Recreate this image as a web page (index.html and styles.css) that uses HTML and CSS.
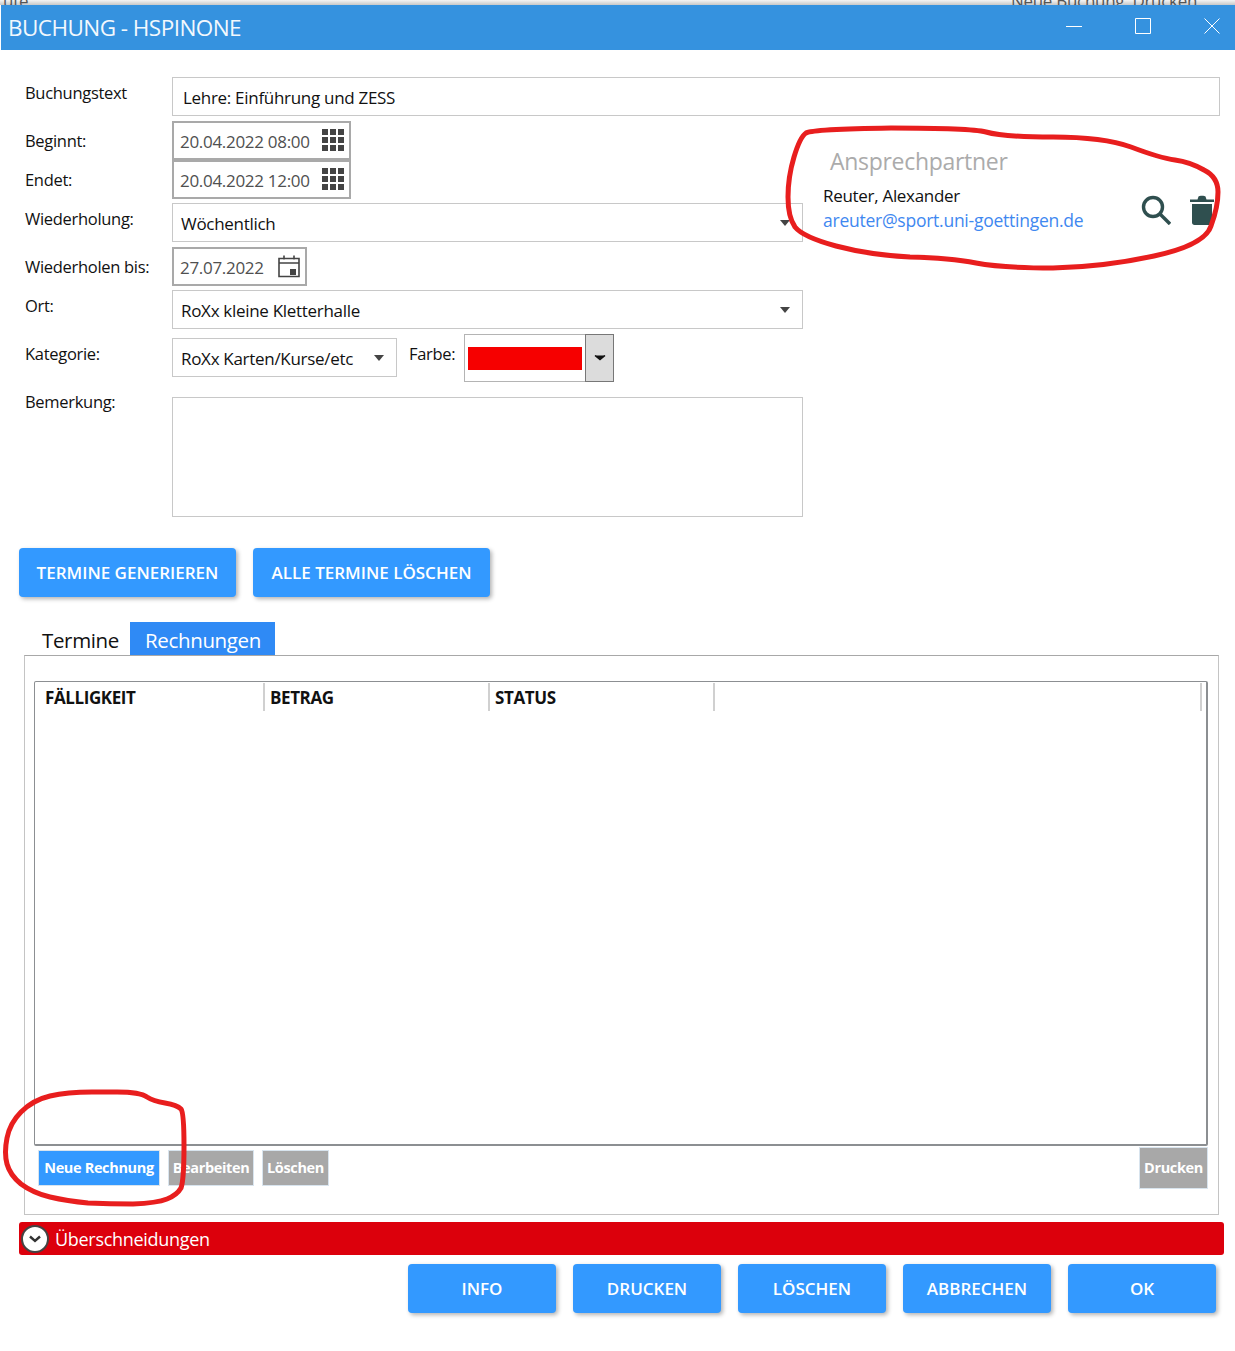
FILE: index.html
```html
<!DOCTYPE html>
<html lang="de">
<head>
<meta charset="utf-8">
<title>Buchung - HSPinOne</title>
<link rel="stylesheet" href="styles.css">
</head>
<body>
<div class="page">
  <div class="behind">
    <span class="behind-left">ute</span>
    <span class="behind-right">Neue Buchung &nbsp;Drucken</span>
  </div>
  <header class="titlebar">
    <h1 class="title">BUCHUNG - HSPINONE</h1>
    <div class="winctl">
      <svg class="winicon" viewBox="0 0 16 16"><path d="M0 8.5h16"/></svg>
      <svg class="winicon" viewBox="0 0 16 16"><path d="M.5.5h15v15H.5z"/></svg>
      <svg class="winicon" viewBox="0 0 16 16"><path d="M.5.5l15 15M15.500.5l-15 15"/></svg>
    </div>
  </header>

  <div class="row row-text">
    <label class="label label-top">Buchungstext</label>
    <div class="field field-text">Lehre: Einführung und ZESS</div>
  </div>

  <div class="upper">
    <div class="left">
      <div class="row row-begin">
        <label class="label">Beginnt:</label>
        <div class="field date date-wide">20.04.2022 08:00
          <svg class="grid-icon" viewBox="0 0 22 22"><path d="M0 0h6v6H0zM8 0h6v6H8zM16 0h6v6h-6zM0 8h6v6H0zM8 8h6v6H8zM16 8h6v6h-6zM0 16h6v6H0zM8 16h6v6H8zM16 16h6v6h-6z"/></svg>
        </div>
      </div>
      <div class="row">
        <label class="label">Endet:</label>
        <div class="field date date-wide">20.04.2022 12:00
          <svg class="grid-icon" viewBox="0 0 22 22"><path d="M0 0h6v6H0zM8 0h6v6H8zM16 0h6v6h-6zM0 8h6v6H0zM8 8h6v6H8zM16 8h6v6h-6zM0 16h6v6H0zM8 16h6v6H8zM16 16h6v6h-6z"/></svg>
        </div>
      </div>
      <div class="row row-repeat">
        <label class="label label-top">Wiederholung:</label>
        <div class="field select select-full">Wöchentlich<span class="caret"></span></div>
      </div>
      <div class="row row-until">
        <label class="label">Wiederholen bis:</label>
        <div class="field date date-small">27.07.2022
          <svg class="cal-icon" viewBox="0 0 22 24"><path class="cal-line" d="M1 4.500h20v18H1zM1 9h20M6 1.500v4M16 1.500v4"/><path class="cal-fill" d="M12 15h6v6h-6z"/></svg>
        </div>
      </div>
      <div class="row row-place">
        <label class="label label-top">Ort:</label>
        <div class="field select select-full">RoXx kleine Kletterhalle<span class="caret"></span></div>
      </div>
      <div class="row row-cat">
        <label class="label label-cat">Kategorie:</label>
        <div class="field select select-cat"><span class="clip">RoXx Karten/Kurse/etc</span><span class="caret"></span></div>
        <label class="label-color">Farbe:</label>
        <div class="picker">
          <div class="swatch-wrap"><div class="swatch"></div></div>
          <div class="picker-btn"><svg class="picker-chev" viewBox="0 0 12 8"><path d="M1 1.500l5 4 5-4"/></svg></div>
        </div>
      </div>
      <div class="row">
        <label class="label label-note">Bemerkung:</label>
        <div class="field note"></div>
      </div>
    </div>

    <section class="contact">
      <h2 class="contact-title">Ansprechpartner</h2>
      <div class="contact-row">
        <div class="person">
          <div class="person-name">Reuter, Alexander</div>
          <a class="person-mail" href="#">areuter@sport.uni-goettingen.de</a>
        </div>
        <svg class="icon-search" viewBox="0 0 30 30"><circle cx="12" cy="12" r="9.500"/><path d="M19 19l10 10"/></svg>
        <svg class="icon-trash" viewBox="0 0 24 30"><path d="M0 4.500h24V7H0zM8.500 1.500C9 .5 15 .5 15.500 1.500l1 3h-9zM2 9h20v18.500c0 1.500-1 2.500-2.500 2.500h-15C3 30 2 29 2 27.500z"/></svg>
      </div>
    </section>
  </div>

  <div class="actions">
    <button class="btn btn-gen">TERMINE GENERIEREN</button>
    <button class="btn btn-del">ALLE TERMINE LÖSCHEN</button>
  </div>

  <nav class="tabs">
    <span class="tab">Termine</span>
    <span class="tab tab-active">Rechnungen</span>
  </nav>

  <section class="panel">
    <div class="table">
      <div class="thead">
        <div class="th th-first">FÄLLIGKEIT</div>
        <div class="th">BETRAG</div>
        <div class="th">STATUS</div>
        <div class="th th-last"></div>
      </div>
    </div>
    <div class="tools">
      <button class="tool tool-on tool-new">Neue Rechnung</button>
      <button class="tool tool-edit">Bearbeiten</button>
      <button class="tool tool-del">Löschen</button>
      <button class="tool tool-print">Drucken</button>
    </div>
  </section>

  <div class="conflict">
    <span class="conflict-toggle"><svg class="conflict-chev" viewBox="0 0 12 8"><path d="M1 1.500l5 4.500 5-4.500"/></svg></span>
    <span class="conflict-text">Überschneidungen</span>
  </div>

  <footer class="footer">
    <button class="btn btn-foot">INFO</button>
    <button class="btn btn-foot">DRUCKEN</button>
    <button class="btn btn-foot">LÖSCHEN</button>
    <button class="btn btn-foot">ABBRECHEN</button>
    <button class="btn btn-foot">OK</button>
  </footer>

  <svg class="scribble" viewBox="0 0 1235 1351">
    <path d="M806 133Q813 129 891 128Q970 128 986 132Q1003 137 1053 137Q1103 137 1131 147Q1160 158 1175 160Q1190 162 1204 170Q1218 177 1218 192Q1218 207 1211 226Q1205 245 1154 256Q1103 267 1053 268Q1003 268 976 263Q950 258 910 257Q870 255 836 246Q803 237 795 227Q788 217 788 197Q788 177 794 157Q800 137 806 133Z"/>
    <path d="M117 1092Q140 1092 147 1097Q153 1101 165 1103Q177 1105 181 1109Q184 1113 184 1146Q184 1180 181 1188Q177 1195 167 1199Q157 1203 133 1204Q110 1204 88 1203Q67 1201 50 1197Q33 1193 21 1184Q10 1175 7 1164Q4 1153 7 1138Q10 1123 21 1112Q33 1100 50 1096Q67 1092 92 1092Z"/>
  </svg>
</div>
</body>
</html>
```
FILE: styles.css
```css
* { box-sizing: border-box; }
html, body { margin: 0; padding: 0; background: #fff; }
body { font-family: "Open Sans", "Noto Sans", sans-serif; font-size: 16.5px; color: #111; letter-spacing: -0.3px; }
.page { position: relative; width: 1235px; height: 1351px; overflow: hidden; }

.behind { height: 5px; background: linear-gradient(#f4f4f4, #c8c8c8); overflow: hidden; position: relative; font-size: 17px; line-height: 5px; color: #555; }
.behind-left { position: absolute; left: 3px; top: -2px; }
.behind-right { position: absolute; left: 1011px; top: -2px; }

.titlebar { height: 45px; margin-left: 1px; background: #3592df; display: flex; align-items: center; justify-content: space-between; color: #fff; }
.title { margin: 0 0 0 7px; font-size: 22.5px; font-weight: 400; letter-spacing: -0.55px; line-height: 48px; color: #f2f8fd; }
.winctl { display: flex; gap: 53px; padding-right: 15px; margin-top: -3px; }
.winicon { width: 16px; height: 16px; fill: none; stroke: #fff; stroke-width: 1; display: block; }

.row { display: flex; align-items: center; }
.label { width: 147px; margin-left: 25px; line-height: 24px; flex: none; }
.label-top { align-self: flex-start; padding-top: 4px; }
.label-cat { align-self: flex-start; padding-top: 8px; }
.label-note { align-self: flex-start; margin-top: 8px; }
.row-text { margin-top: 27px; }
.row-begin { margin-top: 5px; }
.row-repeat { margin-top: 4px; }
.row-until { margin-top: 5px; }
.row-place { margin-top: 4px; }
.row-cat { margin-top: 5px; align-items: flex-start; }

.field { height: 39px; border: 1px solid #c8c8c8; background: #fff; display: flex; align-items: center; color: #111; flex: none; position: relative; white-space: nowrap; font-size: 17px; }
.field-text { width: 1048px; padding-left: 10px; padding-top: 2px; }

.date { border: 2px solid #a9a9a9; padding-left: 6px; color: #505050; padding-top: 1px; }
.date-wide { width: 179px; }
.date-small { width: 135px; }
.grid-icon { position: absolute; left: 148px; top: 6px; width: 22px; height: 22px; fill: #444; }
.cal-icon { position: absolute; left: 104px; top: 5px; width: 22px; height: 24px; }
.cal-line { fill: none; stroke: #444; stroke-width: 1.600; }
.cal-fill { fill: #444; }

.select { padding-left: 8px; padding-top: 2px; }
.select-full { width: 631px; }
.select-cat { width: 225px; margin-top: 4px; }
.caret { position: absolute; right: 12px; top: 16px; width: 0; height: 0; border-left: 5.500px solid transparent; border-right: 5.500px solid transparent; border-top: 6px solid #444; }
.clip { display: block; width: 175px; overflow: hidden; }

.label-color { width: 55px; margin-left: 12px; line-height: 24px; padding-top: 8px; flex: none; }
.picker { width: 150px; height: 48px; border: 1px solid #b4b4b4; display: flex; flex: none; }
.swatch-wrap { flex: 1; display: flex; align-items: center; padding: 1px 2px 0 3px; }
.swatch { width: 114px; height: 23px; background: #f60000; }
.picker-btn { width: 29px; margin: -1px -1px -1px 0; background: #dcdcdc; border: 1px solid #777; display: flex; align-items: center; justify-content: center; }
.picker-chev { width: 12px; height: 8px; fill: #111; stroke: #111; stroke-width: 1.500; }

.note { width: 631px; height: 120px; margin-top: 15px; }

.upper { display: flex; height: 401px; }
.left { width: 803px; flex: none; }
.contact { flex: 1; padding: 29px 21px 0 20px; }
.contact-title { margin: 0 0 0 7px; font-size: 23px; line-height: 32px; font-weight: 400; color: #ababab; letter-spacing: -0.3px; }
.contact-row { display: flex; margin-top: 7px; }
.person { flex: 1; }
.person-name { line-height: 24px; font-size: 17px; }
.person-mail { display: block; line-height: 24px; color: #3f88f0; text-decoration: none; font-size: 17.500px; letter-spacing: -0.25px; }
.icon-search { width: 30px; height: 30px; margin-top: 11px; fill: none; stroke: #2f4f4f; stroke-width: 3.400; }
.icon-trash { width: 24px; height: 30px; margin: 11px 0 0 19px; fill: #2f4f4f; }

.actions { display: flex; gap: 17px; margin: 31px 0 0 19px; }
.btn { height: 49px; border: 0; border-radius: 4px; background: #3399ff; color: #fff; font: 600 17px "Open Sans", sans-serif; letter-spacing: 0; box-shadow: 2px 2px 4px rgba(0,0,0,.3); padding: 0; }
.btn-gen { width: 217px; }
.btn-del { width: 237px; }

.tabs { display: flex; margin: 25px 0 0 27px; height: 33px; }
.tab { width: 103px; padding-left: 15px; font-size: 20.500px; line-height: 36px; letter-spacing: -0.35px; }
.tab-active { width: 145px; background: #2f8af5; color: #fff; }

.panel { margin-left: 24px; width: 1195px; height: 560px; border: 1px solid #c4c4c4; border-top-color: #a8a8a8; padding: 25px 10px 0 9px; }
.table { height: 465px; border: 2px solid #8c8f92; border-width: 1.500px 2px 2px 1.500px; border-radius: 2px; padding: 1px 0 0; }
.thead { display: flex; height: 28px; }
.th { width: 225px; padding-left: 5px; border-right: 2px solid #d0d0d0; font-weight: 700; font-size: 17px; line-height: 30px; letter-spacing: -0.4px; }
.th-first { width: 230px; padding-left: 10px; }
.th-last { width: 487px; }

.tools { display: flex; align-items: center; height: 43px; padding-left: 4px; gap: 8px; }
.tool { height: 36px; border: 1px solid #d8e4ee; background: #a8a8a8; color: #fff; font: 700 14.500px "Open Sans", sans-serif; letter-spacing: -0.35px; padding: 0; white-space: nowrap; }
.tool-on { background: #3399ff; }
.tool-new { width: 122px; }
.tool-edit { width: 86px; }
.tool-del { width: 67px; }
.tool-print { width: 69px; height: 42px; margin-left: auto; }

.conflict { margin: 7px 0 0 19px; width: 1205px; height: 33px; background: #dc000c; border-radius: 3px; display: flex; align-items: center; color: #fff; padding-left: 2px; }
.conflict-toggle { width: 28px; height: 28px; border-radius: 50%; background: #fff; border: 2px solid #444; display: flex; align-items: center; justify-content: center; flex: none; }
.conflict-chev { width: 12px; height: 8px; fill: none; stroke: #333; stroke-width: 2.400; }
.conflict-text { margin-left: 6px; font-size: 18px; letter-spacing: -0.3px; }

.footer { display: flex; justify-content: flex-end; gap: 17px; margin: 9px 19px 0 0; }
.btn-foot { width: 148px; }

.scribble { position: absolute; left: 0; top: 0; width: 1235px; height: 1351px; pointer-events: none; fill: none; stroke: #e81e1e; stroke-width: 5; stroke-linejoin: round; }
```
